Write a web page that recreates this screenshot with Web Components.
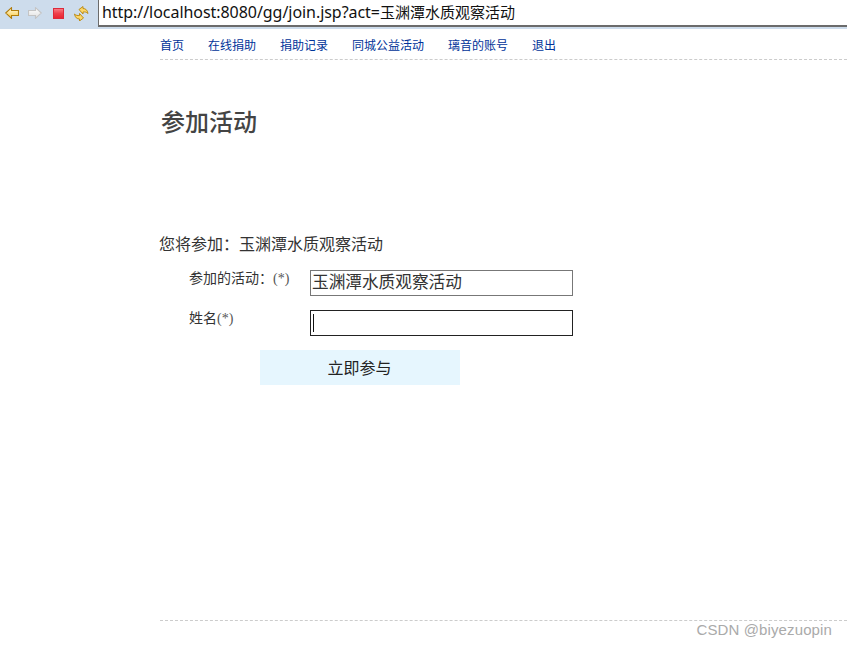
<!DOCTYPE html>
<html lang="zh"><head><meta charset="utf-8"><title>join</title>
<style>
html,body{margin:0;padding:0;background:#fff;height:647px;overflow:hidden}
body{font-family:"Liberation Sans","Noto Sans CJK SC",sans-serif;color:#333;display:flex;flex-direction:column}
</style></head><body>
<browser-bar url="http://localhost:8080/gg/join.jsp?act=" act="玉渊潭水质观察活动"></browser-bar>
<site-nav></site-nav>
<join-page></join-page>
<site-footer></site-footer>
<script>
const F='"Liberation Sans","Noto Sans CJK SC",sans-serif';
customElements.define('browser-bar',class extends HTMLElement{connectedCallback(){
 const s=this.attachShadow({mode:'open'});
 s.innerHTML=`<style>
 :host{display:flex;height:29px;background:#cddcec;flex:none;box-sizing:border-box}
 .icons{width:98px;flex:none;display:flex;align-items:center;padding:0 0 3px 5px;box-sizing:border-box;gap:0}
 svg{display:block;flex:none}
 .url{flex:1;height:27px;box-sizing:border-box;background:#fff;border-left:1px solid #6b6b6b;border-bottom:2px solid #6b6b6b;padding-left:3px;font:16px/25px "Noto Sans","Noto Sans CJK SC",sans-serif;letter-spacing:-.05px;color:#111;white-space:nowrap;overflow:hidden}
 .url span{font-size:15px;letter-spacing:0;line-height:0}
 </style>
 <div class="icons">
 <svg width="14" height="12" viewBox="0 0 14 12" style="margin-right:9px"><defs><linearGradient id="y" x1="0" y1="0" x2="0" y2="1"><stop offset="0" stop-color="#fffbe6"/><stop offset="1" stop-color="#fbc93e"/></linearGradient><linearGradient id="g" x1="0" y1="0" x2="0" y2="1"><stop offset="0" stop-color="#fff"/><stop offset="1" stop-color="#e0e0e0"/></linearGradient></defs><path d="M.7 6 6.500.7v2.800h7v5h-7v2.800z" fill="url(#y)" stroke="#b07c0c" stroke-width="1.100"/></svg>
 <svg width="14" height="12" viewBox="0 0 14 12" style="margin-right:11px"><path d="M13.300 6 7.500.7v2.800h-7v5h7v2.800z" fill="url(#g)" stroke="#c4c4c4" stroke-width="1.100"/></svg>
 <svg width="11" height="11" viewBox="0 0 11 11" style="margin-right:10px"><defs><linearGradient id="r" x1="0" y1="0" x2="0" y2="1"><stop offset="0" stop-color="#f98088"/><stop offset=".5" stop-color="#ef3f4b"/><stop offset="1" stop-color="#e8222f"/></linearGradient></defs><rect x=".5" y=".5" width="10" height="10" fill="url(#r)" stroke="#dc2a3a"/></svg>
 <svg width="15" height="15" viewBox="0 0 15 15"><path d="M5 3.500 9 .5v2c2.500 0 4.500 1.500 5 5-1.500-1.500-3-1.700-5-1.500v2z" fill="#fcd668" stroke="#b8860b" stroke-width=".9"/><path d="M5 3.500 9 .5v2c2.500 0 4.500 1.500 5 5-1.500-1.500-3-1.700-5-1.500v2z" transform="rotate(180 7.250 7.750)" fill="#fcd668" stroke="#b8860b" stroke-width=".9"/></svg>
 </div><div class="url">${this.getAttribute('url')}<span>${this.getAttribute('act')}</span></div>`;
}});
customElements.define('site-nav',class extends HTMLElement{connectedCallback(){
 const s=this.attachShadow({mode:'open'});
 s.innerHTML=`<style>
 :host{display:flex;gap:24px;flex:none;height:25px;padding-top:5px;margin-left:160px;border-bottom:1px dashed #ccc;font:12px/25px ${F};color:#003399}
 a{color:inherit;text-decoration:none}
 </style>`+['首页','在线捐助','捐助记录','同城公益活动','璃音的账号','退出'].map(t=>`<a href="#">${t}</a>`).join('');
}});
customElements.define('join-page',class extends HTMLElement{connectedCallback(){
 const s=this.attachShadow({mode:'open'});
 s.innerHTML=`<style>
 :host{display:block;flex:none;height:560px;margin-left:160px;color:#333;font-family:${F};box-sizing:border-box}
 h1{margin:0;padding-top:48px;font:500 24px/30px ${F};color:#444;padding-left:1px}
 p{margin:-1px 0 0 -1px;padding-top:96px;font:16px/24px ${F}}
 b{font-weight:400;font-family:"Noto Sans CJK TC",sans-serif;line-height:0}
 .rows{display:grid;grid-template-columns:150px 263px;row-gap:14px;margin-top:13px}
 label{font:14px/18px ${F};padding:0 0 0 29px;margin-top:-1px}
 i{font:14px/18px "Liberation Serif",serif;color:#555;line-height:0}
 .box{height:26px;box-sizing:border-box;border:1px solid #777;font:16.67px/24px ${F};padding-left:1px;color:#333;background:#fff}
 .box.on{border-color:#222;padding-left:2px}
 .caret{display:block;width:1px;height:18px;background:#111;margin-top:3px}
 .btn{display:block;margin:14px 0 0 100px;width:200px;height:35px;background:#e6f6fe;font:16px/37px ${F};color:#222;text-align:center;text-indent:-1px}
 </style>
 <h1>参加活动</h1>
 <p>您将参加<b>：</b>玉渊潭水质观察活动</p>
 <div class="rows">
  <label>参加的活动<b>：</b><i>(*)</i></label><div class="box">玉渊潭水质观察活动</div>
  <label>姓名<i>(*)</i></label><div class="box on"><span class="caret"></span></div>
 </div>
 <div class="btn">立即参与</div>`;
}});
customElements.define('site-footer',class extends HTMLElement{connectedCallback(){
 const s=this.attachShadow({mode:'open'});
 s.innerHTML=`<style>
 :host{display:block;flex:1;margin-left:160px;border-top:1px dashed #ccc;position:relative}
 span{position:absolute;right:15px;top:0;font:15px/18px ${F};letter-spacing:.12px;color:#aaa;white-space:nowrap}
 </style><span>CSDN @biyezuopin</span>`;
}});
</script>
</body></html>
